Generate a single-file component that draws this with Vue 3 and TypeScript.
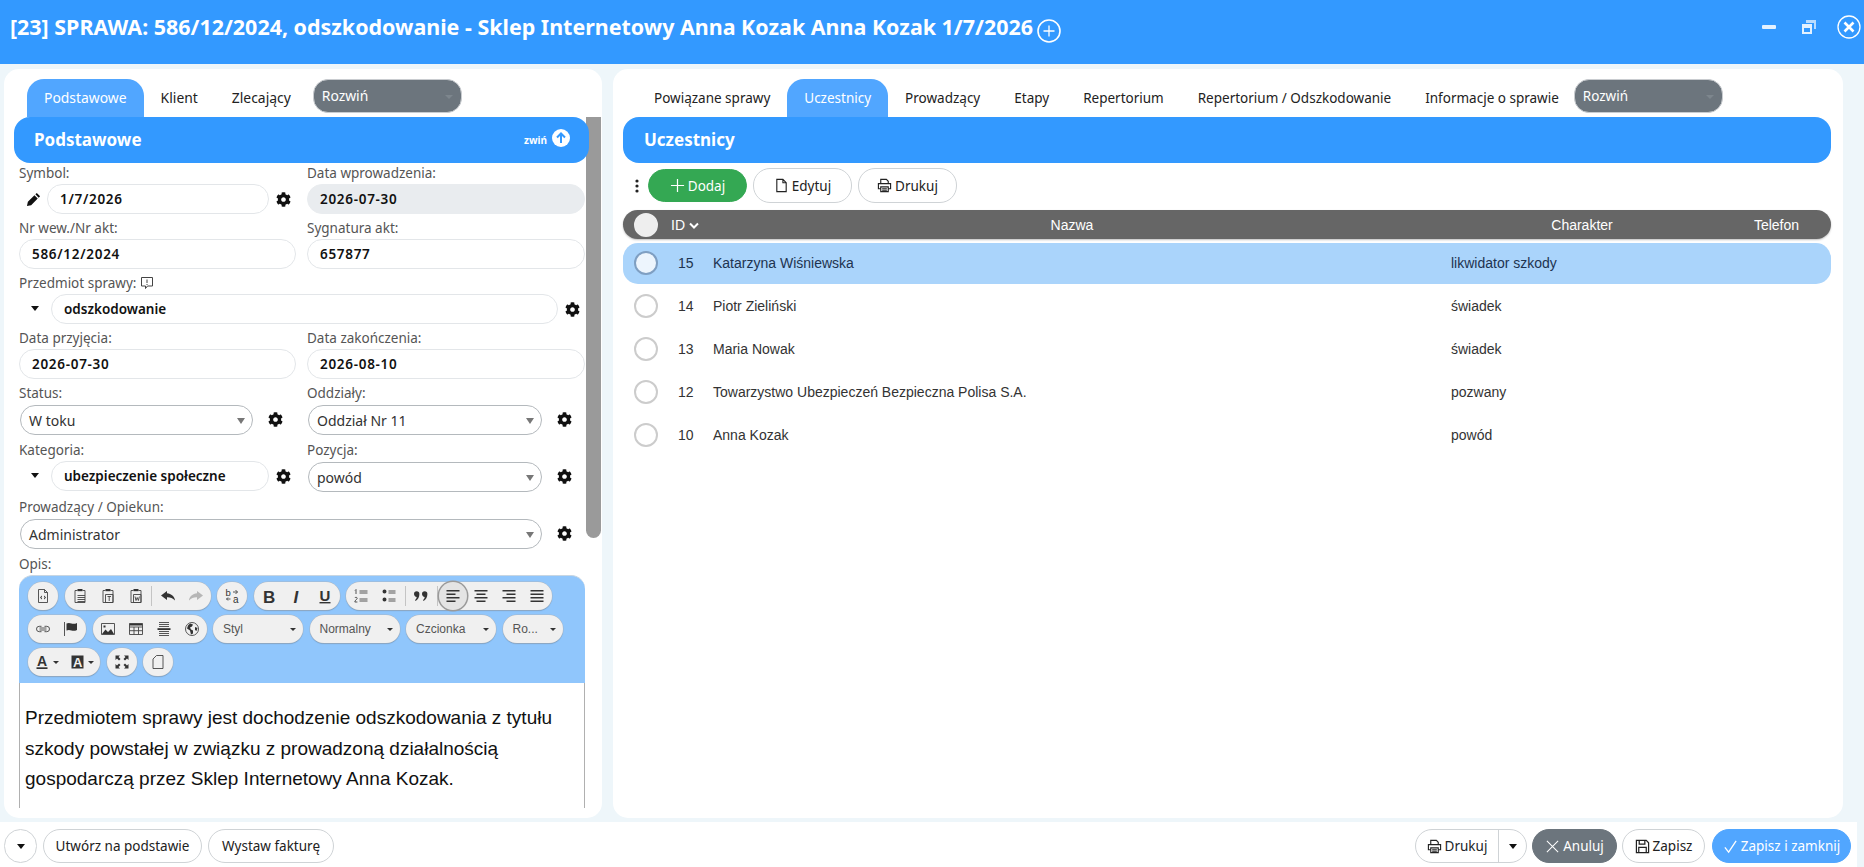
<script setup lang="ts">
type Glyph = { c: string; x: number; y: number; size: number; bold?: boolean; italic?: boolean; fill?: string };
type EdIcon = { f?: string; s?: string; t?: Glyph[] };
type Item =
  | { kind: 'btn'; icon: string; arrow?: boolean; active?: boolean; dim?: boolean }
  | { kind: 'sep' };
type Group = { items?: Item[]; combo?: string; wide?: boolean };

const cog =
  'M487.4 315.7l-42.6-24.6c4.3-23.2 4.3-47 0-70.2l42.6-24.6c4.9-2.8 7.1-8.6 5.5-14-11.1-35.6-30-67.8-54.7-94.6-3.8-4.1-10-5.1-14.8-2.3L380.8 110c-17.9-15.4-38.5-27.3-60.8-35.1V25.8c0-5.6-3.9-10.5-9.4-11.7-36.7-8.2-74.3-7.8-109.2 0-5.5 1.2-9.4 6.1-9.4 11.7V75c-22.2 7.9-42.8 19.8-60.8 35.1L88.7 85.5c-4.9-2.8-11-1.9-14.8 2.3-24.7 26.7-43.6 58.9-54.7 94.6-1.7 5.4.6 11.2 5.5 14L67.3 221c-4.3 23.2-4.3 47 0 70.2l-42.6 24.6c-4.9 2.8-7.1 8.6-5.5 14 11.1 35.6 30 67.8 54.7 94.6 3.8 4.1 10 5.1 14.8 2.3l42.6-24.6c17.9 15.4 38.5 27.3 60.8 35.1v49.2c0 5.6 3.9 10.5 9.4 11.7 36.7 8.2 74.3 7.8 109.2 0 5.5-1.2 9.4-6.1 9.4-11.7v-49.2c22.2-7.9 42.8-19.8 60.8-35.1l42.6 24.6c4.9 2.8 11 1.9 14.8-2.3 24.7-26.7 43.6-58.9 54.7-94.6 1.5-5.5-.7-11.3-5.6-14.1zM256 336c-44.1 0-80-35.9-80-80s35.9-80 80-80 80 35.9 80 80-35.9 80-80 80z';

const clip = 'M5.500 1h5v2.200h-5z';
const icons: Record<string, EdIcon> = {
  source: { s: 'M3.500 1.500h6l3 3v10h-9zM9.500 1.500v3h3', f: 'M7 7.500l-2 2 2 2v-1.200l-.8-.8.8-.8zM9 7.500l2 2-2 2v-1.200l.8-.8-.8-.8z' },
  paste: { s: 'M5.500 2.500h-2.500v12h10v-12h-2.500M5.500 7.500h7.500M5.500 9.500h7.500M5.500 11.500h7.500M5.500 13.500h7.500', f: clip },
  pasteT: { s: 'M5.500 2.500h-2.500v12h10v-12h-2.500M5.500 6.500h7.500v8h-7.500zM7.500 8.500h3.500M9.200 8.500v4.500', f: clip },
  pasteW: { s: 'M5.500 2.500h-2.500v12h10v-12h-2.500M5.500 6.500h7.500v8h-7.500zM7 8.500l1 4 1.200-3 1.200 3 1-4', f: clip },
  undo: { f: 'M7 3L1 7.500 7 12V9.300c3-.2 5.500.8 8 3.200-.3-4-3.800-7-8-7.300z' },
  redo: { f: 'M9 3l6 4.500L9 12V9.300c-3-.2-5.500.8-8 3.200.3-4 3.800-7 8-7.300z' },
  find: {
    s: 'M9 4h4.500M11.500 2l2 2-2 2M6.500 11h-4M4 9.500L2.500 11 4 12.500',
    t: [
      { c: 'b', x: 1.500, y: 7.500, size: 9.500 },
      { c: 'a', x: 9, y: 15, size: 10 },
    ],
  },
  bold: { t: [{ c: 'B', x: 2, y: 14.500, size: 17, bold: true }] },
  italic: { t: [{ c: 'I', x: 4.500, y: 14.500, size: 17, bold: true, italic: true }] },
  underline: { f: 'M2.500 14h11v1.400h-11z', t: [{ c: 'U', x: 2.500, y: 12.500, size: 15, bold: true }] },
  numbered: { s: 'M6.500 3h8M6.500 5h8M6.500 11h8M6.500 13h8M3 1.500v4.500M2 2.500l1-1M1.800 10c.3-1 2.400-1 2.400.3 0 1-2.400 2-2.400 3.700h2.600' },
  bullet: { f: 'M1.500 3.500a2 2 0 1 1 4 0 2 2 0 1 1-4 0M1.500 11.500a2 2 0 1 1 4 0 2 2 0 1 1-4 0', s: 'M7.500 3h7M7.500 5h7M7.500 11h7M7.500 13h7' },
  quote: {
    f: 'M1 6a2.600 2.600 0 1 1 5.400 0c0 3.200-1.500 5.700-3.800 7l-.6-1c1-.7 1.500-1.600 1.700-3C2.200 8.700 1 7.600 1 6zM9 6a2.600 2.600 0 1 1 5.400 0c0 3.200-1.500 5.700-3.800 7l-.6-1c1-.7 1.500-1.600 1.700-3C10.200 8.700 9 7.600 9 6z',
  },
  left: { f: 'M1.500 2h13v1.600h-13zM1.500 5.500h9v1.600h-9zM1.500 9h13v1.600h-13zM1.500 12.500h9v1.600h-9z' },
  center: { f: 'M1.500 2h13v1.600h-13zM3.500 5.500h9v1.600h-9zM1.500 9h13v1.600h-13zM3.500 12.500h9v1.600h-9z' },
  right: { f: 'M1.500 2h13v1.600h-13zM5.500 5.500h9v1.600h-9zM1.500 9h13v1.600h-13zM5.500 12.500h9v1.600h-9z' },
  justify: { f: 'M1.500 2h13v1.600h-13zM1.500 5.500h13v1.600h-13zM1.500 9h13v1.600h-13zM1.500 12.500h13v1.600h-13z' },
  link: { s: 'M6.500 5.300H4.200a2.700 2.700 0 0 0 0 5.400h2.300M9.500 5.300h2.300a2.700 2.700 0 0 1 0 5.400H9.500M4.500 7h7M4.500 9h7' },
  flag: { s: 'M1.500 1v14', f: 'M3.500 2.500c2-1 3.500-.5 5 0s3.500.5 5.500-.5v7c-2 1-4 1-5.500.5s-3-1-5 0z' },
  image: { s: 'M1.500 2.500h13v11h-13z', f: 'M2 13l3.500-4.500 2.500 2.500 3-3 3 5zM3.500 4.500h2v2h-2z' },
  table: { s: 'M1.500 2.500h13v11h-13zM1.500 6h13M1.500 9.700h13M6 6v7.500M10.500 6v7.500', f: 'M1.500 2.500h13v2h-13z' },
  rule: { f: 'M1.500 7.200h13v1.800h-13z', s: 'M3 1.500h10M3 3.500h10M3 5.500h10M3 10.500h10M3 12.500h10M3 14.500h10' },
  globe: { s: 'M8 1.500a6.500 6.500 0 1 0 0 13 6.500 6.500 0 1 0 0-13', f: 'M6 2.500l3 1-1 2-2 1 1 2 2 1v3l-2 1-1-4-3-2 1-3zM11 6l2.500 1-1 3-1.500-1z' },
  color: { f: 'M1.500 13.300h11v1.700h-11z', t: [{ c: 'A', x: 2, y: 12, size: 14, bold: true }] },
  bg: { f: 'M1.500 1.500h12v13h-12z', t: [{ c: 'A', x: 3, y: 12.500, size: 13, bold: true, fill: '#f0f0f0' }] },
  max: { f: 'M1.500 1.500h4.500L4.500 3l2 2L5 6.500l-2-2L1.500 6zM14.500 1.500V6L13 4.500l-2 2L9.500 5l2-2L10 1.500zM1.500 14.500V10L3 11.500l2-2L6.500 11l-2 2L6 14.500zM14.500 14.500H10l1.500-1.500-2-2L11 9.500l2 2 1.500-1.500z' },
  blocks: { s: 'M6.500 1.500h6.500v13h-10v-9.500z' },
};

const toolbar: Group[][] = [
  [
    { items: [{ kind: 'btn', icon: 'source' }] },
    {
      items: [
        { kind: 'btn', icon: 'paste' },
        { kind: 'btn', icon: 'pasteT' },
        { kind: 'btn', icon: 'pasteW' },
        { kind: 'sep' },
        { kind: 'btn', icon: 'undo' },
        { kind: 'btn', icon: 'redo', dim: true },
      ],
    },
    { items: [{ kind: 'btn', icon: 'find' }] },
    {
      items: [
        { kind: 'btn', icon: 'bold' },
        { kind: 'btn', icon: 'italic' },
        { kind: 'btn', icon: 'underline' },
      ],
    },
    {
      items: [
        { kind: 'btn', icon: 'numbered' },
        { kind: 'btn', icon: 'bullet' },
        { kind: 'sep' },
        { kind: 'btn', icon: 'quote' },
        { kind: 'sep' },
        { kind: 'btn', icon: 'left', active: true },
        { kind: 'btn', icon: 'center' },
        { kind: 'btn', icon: 'right' },
        { kind: 'btn', icon: 'justify' },
      ],
    },
  ],
  [
    {
      items: [
        { kind: 'btn', icon: 'link' },
        { kind: 'btn', icon: 'flag' },
      ],
    },
    {
      items: [
        { kind: 'btn', icon: 'image' },
        { kind: 'btn', icon: 'table' },
        { kind: 'btn', icon: 'rule' },
        { kind: 'btn', icon: 'globe' },
      ],
    },
    { combo: 'Styl', wide: true },
    { combo: 'Normalny', wide: true },
    { combo: 'Czcionka', wide: true },
    { combo: 'Ro...' },
  ],
  [
    {
      items: [
        { kind: 'btn', icon: 'color', arrow: true },
        { kind: 'btn', icon: 'bg', arrow: true },
      ],
    },
    { items: [{ kind: 'btn', icon: 'max' }] },
    { items: [{ kind: 'btn', icon: 'blocks' }] },
  ],
];

const leftTabs = ['Podstawowe', 'Klient', 'Zlecający'];
const rightTabs = [
  'Powiązane sprawy',
  'Uczestnicy',
  'Prowadzący',
  'Etapy',
  'Repertorium',
  'Repertorium / Odszkodowanie',
  'Informacje o sprawie',
];

const people = [
  { id: 15, name: 'Katarzyna Wiśniewska', role: 'likwidator szkody' },
  { id: 14, name: 'Piotr Zieliński', role: 'świadek' },
  { id: 13, name: 'Maria Nowak', role: 'świadek' },
  { id: 12, name: 'Towarzystwo Ubezpieczeń Bezpieczna Polisa S.A.', role: 'pozwany' },
  { id: 10, name: 'Anna Kozak', role: 'powód' },
];
</script>

<template>
  <div class="page">
    <header class="top">
      <h1 class="title">[23] SPRAWA: 586/12/2024, odszkodowanie - Sklep Internetowy Anna Kozak Anna Kozak 1/7/2026</h1>
      <svg class="title-plus" viewBox="0 0 24 24" fill="none" stroke="#fff">
        <circle cx="12" cy="12" r="11" stroke-width="1.600" />
        <path d="M12 6.500v11M6.500 12h11" stroke-width="1.300" />
      </svg>
      <div class="win">
        <svg class="win-min" viewBox="0 0 14 4"><rect width="14" height="4" rx="1" fill="#e3f1ff" /></svg>
        <svg class="win-res" viewBox="0 0 14 14">
          <path d="M4 0h10v9h-2V3H4z" fill="#b9dcff" />
          <path d="M0 4h10v10H0zM2 8v4h6V8z" fill="#e3f1ff" fill-rule="evenodd" />
        </svg>
        <svg class="win-close" viewBox="0 0 24 24" fill="none" stroke="#fff">
          <circle cx="12" cy="12" r="11" stroke-width="1.300" />
          <path d="M7.500 7.500l9 9M16.500 7.500l-9 9" stroke-width="2.600" />
        </svg>
      </div>
    </header>

    <main class="main">
      <section class="panel left">
        <nav class="tabs">
          <span v-for="(t, i) in leftTabs" :key="t" :class="['tab', { on: i === 0 }]">{{ t }}</span>
          <span class="more">Rozwiń<i class="more-arrow"></i></span>
        </nav>
        <div class="bar">
          <span class="bar-title">Podstawowe</span>
          <span class="collapse">zwiń</span>
          <svg class="collapse-icon" viewBox="0 0 18 18">
            <circle cx="9" cy="9" r="9" fill="#fff" />
            <path d="M9 14V5M5 8.500L9 4.500l4 4" fill="none" stroke="#3399ff" stroke-width="2" />
          </svg>
        </div>
        <div class="scrollbar"></div>

        <div class="form">
          <div class="row">
            <div class="field">
              <label>Symbol:</label>
              <div class="ctl">
                <svg class="pencil" viewBox="0 0 16 16">
                  <path d="M11.500 1l3.500 3.500-1.500 1.500L10 2.500zM9 3.500L12.500 7 5.500 14l-4.500 1 1-4.500z" fill="#111" />
                </svg>
                <div class="inp num">1/7/2026</div>
                <svg class="gear" viewBox="0 0 512 512"><path :d="cog" /></svg>
              </div>
            </div>
            <div class="field">
              <label>Data wprowadzenia:</label>
              <div class="inp num off">2026-07-30</div>
            </div>
          </div>

          <div class="row">
            <div class="field">
              <label>Nr wew./Nr akt:</label>
              <div class="inp num">586/12/2024</div>
            </div>
            <div class="field">
              <label>Sygnatura akt:</label>
              <div class="inp num">657877</div>
            </div>
          </div>

          <div class="field">
            <label>
              Przedmiot sprawy:
              <svg class="note" viewBox="0 0 14 14" fill="none" stroke="#444">
                <path d="M1.500 1.500h11v8.500h-5l-2 2.500v-2.500h-4z" />
                <path d="M7 3.500v3.500M7 8v1" />
              </svg>
            </label>
            <div class="ctl">
              <i class="caret"></i>
              <div class="inp">odszkodowanie</div>
              <svg class="gear" viewBox="0 0 512 512"><path :d="cog" /></svg>
            </div>
          </div>

          <div class="row">
            <div class="field">
              <label>Data przyjęcia:</label>
              <div class="inp num">2026-07-30</div>
            </div>
            <div class="field">
              <label>Data zakończenia:</label>
              <div class="inp num">2026-08-10</div>
            </div>
          </div>

          <div class="row">
            <div class="field">
              <label>Status:</label>
              <div class="ctl sel-ctl">
                <div class="sel">W toku<i class="sel-arrow"></i></div>
                <svg class="gear" viewBox="0 0 512 512"><path :d="cog" /></svg>
              </div>
            </div>
            <div class="field">
              <label>Oddziały:</label>
              <div class="ctl sel-ctl">
                <div class="sel">Oddział Nr 11<i class="sel-arrow"></i></div>
                <svg class="gear" viewBox="0 0 512 512"><path :d="cog" /></svg>
              </div>
            </div>
          </div>

          <div class="row">
            <div class="field">
              <label>Kategoria:</label>
              <div class="ctl">
                <i class="caret"></i>
                <div class="inp">ubezpieczenie społeczne</div>
                <svg class="gear" viewBox="0 0 512 512"><path :d="cog" /></svg>
              </div>
            </div>
            <div class="field">
              <label>Pozycja:</label>
              <div class="ctl sel-ctl">
                <div class="sel">powód<i class="sel-arrow"></i></div>
                <svg class="gear" viewBox="0 0 512 512"><path :d="cog" /></svg>
              </div>
            </div>
          </div>

          <div class="field">
            <label>Prowadzący / Opiekun:</label>
            <div class="ctl sel-ctl">
              <div class="sel">Administrator<i class="sel-arrow"></i></div>
              <svg class="gear" viewBox="0 0 512 512"><path :d="cog" /></svg>
            </div>
          </div>

          <div class="field">
            <label>Opis:</label>
            <div class="editor">
              <div class="ed-bar">
                <div v-for="(row, r) in toolbar" :key="r" class="ed-row">
                  <div
                    v-for="(g, gi) in row"
                    :key="gi"
                    :class="['ed-group', { combo: g.combo, wide: g.wide }]"
                  >
                    <template v-if="g.combo">
                      <span>{{ g.combo }}</span><i class="combo-arrow"></i>
                    </template>
                    <template v-for="(it, k) in g.items" v-else :key="k">
                      <span v-if="it.kind === 'sep'" class="ed-sep"></span>
                      <span
                        v-else
                        :class="['ed-btn', { active: it.active, dim: it.dim, split: it.arrow }]"
                      >
                        <svg viewBox="0 0 16 16" class="ed-ico">
                          <path v-if="icons[it.icon].f" :d="icons[it.icon].f" fill="#333" />
                          <path v-if="icons[it.icon].s" :d="icons[it.icon].s" fill="none" stroke="#444" stroke-width="0.900" />
                          <text
                            v-for="tx in icons[it.icon].t"
                            :key="tx.c"
                            :x="tx.x"
                            :y="tx.y"
                            :font-size="tx.size"
                            :font-weight="tx.bold ? 700 : 400"
                            :font-style="tx.italic ? 'italic' : 'normal'"
                            :fill="tx.fill || '#333'"
                            font-family="Liberation Sans, sans-serif"
                          >{{ tx.c }}</text>
                        </svg>
                        <i v-if="it.arrow" class="combo-arrow small"></i>
                      </span>
                    </template>
                  </div>
                </div>
              </div>
              <div class="ed-body">
                Przedmiotem sprawy jest dochodzenie odszkodowania z tytułu szkody powstałej w związku z
                prowadzoną działalnością gospodarczą przez Sklep Internetowy Anna Kozak.
              </div>
            </div>
          </div>
        </div>
      </section>

      <section class="panel right">
        <nav class="tabs">
          <span v-for="(t, i) in rightTabs" :key="t" :class="['tab', { on: i === 1 }]">{{ t }}</span>
          <span class="more">Rozwiń<i class="more-arrow"></i></span>
        </nav>
        <div class="bar">
          <span class="bar-title">Uczestnicy</span>
        </div>
        <div class="actions">
          <svg class="dots" viewBox="0 0 4 14"><circle cx="2" cy="2" r="1.600" /><circle cx="2" cy="7" r="1.600" /><circle cx="2" cy="12" r="1.600" /></svg>
          <button class="btn green">
            <svg class="ico plus" viewBox="0 0 16 16" fill="none" stroke="#fff" stroke-width="1.300"><path d="M8 1v14M1 8h14" /></svg>
            Dodaj
          </button>
          <button class="btn">
            <svg class="ico" viewBox="0 0 16 16" fill="none" stroke="#222" stroke-width="1.200"><path d="M3 1.500h6.500L13 5v9.500H3zM9.500 1.500V5H13" /></svg>
            Edytuj
          </button>
          <button class="btn">
            <svg class="ico" viewBox="0 0 16 16" fill="none" stroke="#222" stroke-width="1.200"><path d="M4 6V1.500h6L12 3.500V6M4 11.500H1.500V6h13v5.500H12M4 9.500h8v5H4zM5.500 11.500h5M5.500 13h5" /></svg>
            Drukuj
          </button>
        </div>
        <div class="thead">
          <span class="tick head"></span>
          <span class="id-head">ID
            <svg viewBox="0 0 10 8" class="chev"><path d="M1 1.500l4 4 4-4" fill="none" stroke="#fff" stroke-width="2" /></svg>
          </span>
          <span>Nazwa</span>
          <span>Charakter</span>
          <span>Telefon</span>
        </div>
        <div class="tbody">
          <div v-for="(p, i) in people" :key="p.id" :class="['tr', { picked: i === 0 }]">
            <span class="tick"></span>
            <span>{{ p.id }}</span>
            <span>{{ p.name }}</span>
            <span>{{ p.role }}</span>
          </div>
        </div>
      </section>
    </main>

    <footer class="foot">
      <button class="btn caret-btn"><i class="caret"></i></button>
      <button class="btn w-basis">Utwórz na podstawie</button>
      <button class="btn w-invoice">Wystaw fakturę</button>
      <span class="grow"></span>
      <div class="split-btn">
        <span class="split-main">
          <svg class="ico" viewBox="0 0 16 16" fill="none" stroke="#222" stroke-width="1.200"><path d="M4 6V1.500h6L12 3.500V6M4 11.500H1.500V6h13v5.500H12M4 9.500h8v5H4zM5.500 11.500h5M5.500 13h5" /></svg>
          Drukuj
        </span>
        <span class="split-side"><i class="caret"></i></span>
      </div>
      <button class="btn gray w-cancel">
        <svg class="ico" viewBox="0 0 16 16" fill="none" stroke="#fff" stroke-width="1.100"><path d="M2 2l12 12M14 2L2 14" /></svg>
        Anuluj
      </button>
      <button class="btn w-save">
        <svg class="ico" viewBox="0 0 16 16" fill="none" stroke="#222" stroke-width="1.300"><path d="M1.500 1.500h10.500l2.500 2.500v10.500h-13zM4.500 1.500v4h6v-4M4 14.500v-5.500h8v5.500" /></svg>
        Zapisz
      </button>
      <button class="btn blue w-close">
        <svg class="ico" viewBox="0 0 16 16" fill="none" stroke="#fff" stroke-width="1.400"><path d="M2 9l4 5 8-12" /></svg>
        Zapisz i zamknij
      </button>
    </footer>
  </div>
</template>

<style>
html,
body {
  margin: 0;
  overflow: hidden;
  background: #eef6fa;
}
</style>

<style scoped>
.page {
  width: 1864px;
  height: 867px;
  display: flex;
  flex-direction: column;
  font-family: 'Noto Sans', sans-serif;
  font-size: 13.500px;
  color: #212529;
}
.top {
  flex: 0 0 64px;
  background: #3399ff;
  display: flex;
  align-items: flex-start;
  padding: 10px 3px 0 10px;
  box-sizing: border-box;
  color: #fff;
}
.title {
  margin: 0;
  font-size: 21.450px;
  line-height: 34px;
  font-weight: 700;
  white-space: nowrap;
}
.title-plus {
  width: 24px;
  height: 24px;
  margin: 9px 0 0 4px;
}
.win {
  margin-left: auto;
  display: flex;
  align-items: center;
  height: 33px;
}
.win-min {
  width: 14px;
  height: 4px;
}
.win-res {
  width: 14px;
  height: 14px;
  margin-left: 26px;
}
.win-close {
  width: 24px;
  height: 24px;
  margin-left: 21px;
}
.main {
  flex: 1;
  min-height: 0;
  display: flex;
  gap: 11px;
  padding: 5px 21px 4px 4px;
}
.panel {
  background: #fff;
  border-radius: 15px;
  padding-top: 10px;
  box-sizing: border-box;
  display: flex;
  flex-direction: column;
  position: relative;
  overflow: hidden;
}
.left {
  width: 598px;
  padding-bottom: 10px;
}
.right {
  flex: 1;
}
.tabs {
  display: flex;
  height: 38px;
  padding-left: 23px;
  flex: none;
}
.left .tabs {
  font-size: 13.900px;
}
.right .tabs {
  padding-left: 24px;
}
.tab {
  padding: 0 17px;
  line-height: 38px;
  white-space: nowrap;
  color: #222;
}
.tab.on {
  background: #51a6ff;
  color: #fff;
  border-radius: 17px 17px 0 0;
}
.more {
  width: 149px;
  height: 34px;
  margin-left: 5px;
  box-sizing: border-box;
  background: #6c757d;
  color: #fff;
  border: 1px solid #c9ccd0;
  border-radius: 15px;
  line-height: 32px;
  padding-left: 8px;
  position: relative;
}
.right .more {
  margin-left: -2px;
}
.more-arrow {
  position: absolute;
  right: 8px;
  top: 15px;
  border: 4px solid transparent;
  border-top-color: #7d868d;
}
.bar {
  flex: none;
  height: 46px;
  background: #3399ff;
  border-radius: 16px;
  margin: 0 10px;
  display: flex;
  align-items: center;
  padding: 0 10px 0 20px;
  color: #fff;
  position: relative;
  z-index: 1;
}
.left .bar {
  margin-right: 13px;
}
.right .bar {
  margin-right: 12px;
  padding-left: 21px;
}
.bar-title {
  font-size: 17px;
  font-weight: 700;
  margin-top: -2px;
}
.collapse {
  margin-left: auto;
  font-size: 10px;
  font-weight: 700;
}
.collapse-icon {
  width: 18px;
  height: 18px;
  margin: -4px 9px 0 5px;
}
.scrollbar {
  position: absolute;
  left: 582px;
  top: 48px;
  width: 15px;
  height: 421px;
  border-radius: 0 0 8px 8px;
  background: #9a9a9a;
}
.form {
  flex: 1;
  min-height: 0;
  overflow: hidden;
  padding: 0 0 0 15px;
  width: 566px;
  margin-top: -1px;
  display: flex;
  flex-direction: column;
  gap: 3px;
}
.row {
  display: grid;
  grid-template-columns: 277px 278px;
  gap: 11px;
  flex: none;
}
.field {
  display: flex;
  flex-direction: column;
  flex: none;
  min-width: 0;
}
label {
  height: 22px;
  line-height: 22px;
  color: #555;
  white-space: nowrap;
  display: flex;
  align-items: center;
  gap: 4px;
}
.ctl {
  display: flex;
  align-items: center;
  height: 30px;
}
.sel-ctl {
  margin: 1px 0;
}
.inp {
  height: 30px;
  box-sizing: border-box;
  border: 1px solid #e3e6e9;
  border-radius: 15px;
  padding: 0 12px;
  line-height: 28px;
  font-weight: 600;
  color: #111;
  min-width: 0;
}
.ctl .inp {
  flex: 1;
}
.num {
  letter-spacing: 0.700px;
}
.inp.off {
  background: #e9ecef;
  border-color: #e9ecef;
}
.sel {
  flex: 1;
  height: 30px;
  margin-left: 1px;
  box-sizing: border-box;
  border: 1px solid #b4b9bd;
  border-radius: 15px;
  padding: 0 8px;
  line-height: 29px;
  font-size: 14px;
  color: #333;
  position: relative;
}
.sel-arrow {
  position: absolute;
  right: 7px;
  top: 12px;
  border: 4px solid transparent;
  border-top: 6px solid #777;
}
.gear {
  flex: none;
  width: 15px;
  height: 15px;
  fill: #111;
  margin: 0 5px 0 7px;
}
.sel-ctl .gear {
  margin: -2px 13px 0 15px;
}
.pencil {
  flex: none;
  width: 15px;
  height: 15px;
  margin: 0 6px 0 7px;
}
.caret {
  flex: none;
  display: inline-block;
  width: 0;
  height: 0;
  border: 4px solid transparent;
  border-top: 5px solid #111;
  border-bottom: 0;
}
.ctl .caret {
  margin: -2px 12px 0 12px;
}
.note {
  width: 14px;
  height: 14px;
}
.editor {
  width: 566px;
  flex: none;
}
.ed-bar {
  height: 108px;
  box-sizing: border-box;
  background: #90c6fc;
  border-top: 1px solid #c8d6e2;
  border-radius: 14px 14px 0 0;
  padding: 6px 9px 0;
  display: flex;
  flex-direction: column;
  gap: 5px;
}
.ed-row {
  display: flex;
  gap: 6.500px;
}
.ed-group {
  height: 28px;
  box-sizing: content-box;
  display: flex;
  align-items: center;
  padding: 0 1px;
  background: #f0f0f0;
  border-radius: 14px;
  box-shadow: 0 0 0 0.500px #a9b6c4, 0 1px 1px rgba(60, 80, 100, 0.4);
}
.ed-btn {
  width: 28px;
  height: 28px;
  display: flex;
  align-items: center;
  justify-content: center;
  border-radius: 50%;
  box-sizing: border-box;
}
.ed-btn.split {
  width: 35px;
  gap: 2px;
}
.ed-btn.active {
  background: #e4e4e4;
  box-shadow: 0 0 0 1.500px #9a9a9a;
}
.ed-btn.dim {
  opacity: 0.3;
}
.ed-ico {
  width: 16px;
  height: 16px;
  overflow: visible;
}
.ed-sep {
  width: 1px;
  height: 20px;
  background: #c4c4c4;
  margin: 0 1.500px;
}
.combo {
  width: 60px;
  padding: 0 0 0 10px;
  box-sizing: border-box;
  font: 12px 'Liberation Sans', sans-serif;
  color: #555;
  position: relative;
}
.combo.wide {
  width: 90px;
}
.combo-arrow {
  border: 3px solid transparent;
  border-top: 3px solid #333;
  border-bottom: 0;
  width: 0;
  height: 0;
}
.combo .combo-arrow {
  position: absolute;
  right: 7px;
  top: 13px;
}
.ed-body {
  height: 125px;
  box-sizing: border-box;
  border: 1px solid #b0b0b0;
  border-width: 0 1px;
  padding: 20px 5px 0;
  font: 19px/30.500px 'Liberation Sans', sans-serif;
  color: #111;
}
.actions {
  flex: none;
  display: flex;
  align-items: center;
  height: 35px;
  margin-top: 5px;
  padding-left: 22px;
  gap: 6px;
}
.dots {
  width: 4px;
  height: 14px;
  fill: #222;
  margin-right: 3px;
}
.btn {
  height: 35px;
  box-sizing: border-box;
  border: 1px solid #cfd3d6;
  border-radius: 17px;
  background: #fff;
  font: inherit;
  color: #222;
  padding: 0;
  display: inline-flex;
  align-items: center;
  justify-content: center;
  gap: 3px;
  white-space: nowrap;
}
.ico {
  width: 15px;
  height: 15px;
  flex: none;
}
.actions .btn {
  width: 99px;
}
.green {
  background: #34a853;
  border-color: #34a853;
  color: #fff;
  height: 33px;
}
.gray {
  background: #6c757d;
  border-color: #6c757d;
  color: #fff;
}
.blue {
  background: #51a6ff;
  border-color: #51a6ff;
  color: #fff;
}
.thead {
  flex: none;
  height: 29px;
  margin: 7px 12px 0 10px;
  background: #666;
  color: #fff;
  border-radius: 15px;
  display: grid;
  grid-template-columns: 48px 40px 722px 298px 1fr;
  align-items: center;
  text-align: center;
  font: 14px 'Liberation Sans', sans-serif;
  padding-right: 9px;
  box-shadow: 0 1px 2px rgba(0, 0, 0, 0.25);
}
.id-head {
  text-align: left;
}
.chev {
  width: 10px;
  height: 8px;
}
.tick {
  display: block;
  width: 24px;
  height: 24px;
  box-sizing: border-box;
  border: 2px solid #ccc;
  border-radius: 50%;
  background: #fff;
  margin-left: 11px;
}
.tick.head {
  background: #eee;
  border-color: #eee;
}
.tbody {
  flex: none;
  margin: 4px 12px 0 10px;
}
.tr {
  height: 43px;
  display: grid;
  grid-template-columns: 55px 35px 738px 1fr;
  align-items: center;
  font: 14px 'Liberation Sans', sans-serif;
  color: #333;
}
.tr span {
  margin-top: -1px;
}
.tr.picked {
  height: 41px;
  margin-bottom: 1px;
  background: #aad4fb;
  border-radius: 15px;
  color: #1d3350;
}
.tr.picked .tick {
  background: #edf5fd;
  border-color: #7f9fc2;
}
.foot {
  flex: 0 0 45px;
  box-sizing: border-box;
  margin-right: 7px;
  background: #fff;
  display: flex;
  align-items: flex-start;
  gap: 6px;
  padding: 7px 6px 0 4px;
}
.foot .btn {
  height: 34px;
}
.caret-btn {
  width: 33px;
}
.w-basis {
  width: 159px;
}
.w-invoice {
  width: 126px;
}
.w-cancel {
  width: 85px;
  margin-left: -1px;
}
.w-save {
  width: 83px;
  margin-left: -1px;
}
.w-close {
  width: 139px;
  margin-left: 1px;
}
.grow {
  flex: 1;
}
.split-btn {
  height: 34px;
  box-sizing: border-box;
  border: 1px solid #cfd3d6;
  border-radius: 17px;
  display: flex;
  align-items: center;
  width: 112px;
}
.split-main {
  flex: 1;
  display: flex;
  align-items: center;
  justify-content: center;
  gap: 3px;
  height: 100%;
  border-right: 1px solid #cfd3d6;
}
.split-side {
  width: 27px;
  display: flex;
  justify-content: center;
}
</style>
